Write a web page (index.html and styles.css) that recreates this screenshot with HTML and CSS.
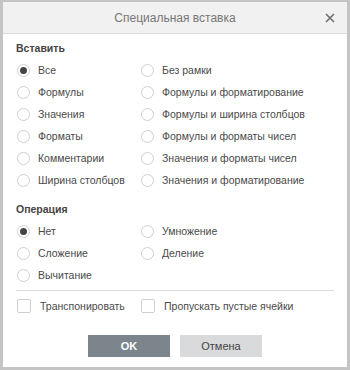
FILE: index.html
```html
<!DOCTYPE html>
<html lang="ru">

<head>
    <meta charset="UTF-8">
    <title>Специальная вставка</title>
    <link rel="stylesheet" href="styles.css">
</head>

<body>
    <div class="dialog">
        <div class="header">
            <span class="title">Специальная вставка</span>
            <span class="close">
                <svg width="10" height="10" viewBox="0 0 10 10">
                    <path d="M1 1L9 9M9 1L1 9" stroke="#6f6f6f" stroke-width="1.6" fill="none" />
                </svg>
            </span>
        </div>

        <div class="body">
            <div class="label">Вставить</div>
            <div class="grid grid-paste">
                <div class="radio checked"><i></i>Все</div>
                <div class="radio"><i></i>Без рамки</div>
                <div class="radio"><i></i>Формулы</div>
                <div class="radio"><i></i>Формулы и форматирование</div>
                <div class="radio"><i></i>Значения</div>
                <div class="radio"><i></i>Формулы и ширина столбцов</div>
                <div class="radio"><i></i>Форматы</div>
                <div class="radio"><i></i>Формулы и форматы чисел</div>
                <div class="radio"><i></i>Комментарии</div>
                <div class="radio"><i></i>Значения и форматы чисел</div>
                <div class="radio"><i></i>Ширина столбцов</div>
                <div class="radio"><i></i>Значения и форматирование</div>
            </div>

            <div class="label label-op">Операция</div>
            <div class="grid grid-op">
                <div class="radio checked"><i></i>Нет</div>
                <div class="radio"><i></i>Умножение</div>
                <div class="radio"><i></i>Сложение</div>
                <div class="radio"><i></i>Деление</div>
                <div class="radio"><i></i>Вычитание</div>
            </div>

            <div class="sep"></div>

            <div class="checks">
                <div class="check"><i></i>Транспонировать</div>
                <div class="check"><i></i>Пропускать пустые ячейки</div>
            </div>

            <div class="buttons">
                <div class="btn btn-ok">OK</div>
                <div class="btn btn-cancel">Отмена</div>
            </div>
        </div>
    </div>
</body>

</html>
```

FILE: styles.css
```css
* {
    box-sizing: border-box;
}

body {
    margin: 0;
    font-family: "Liberation Sans", Arial, sans-serif;
    font-size: 10.5px;
    color: #444;
}

.dialog {
    width: 350px;
    height: 370px;
    border: 3px solid #c4c4c4;
    border-top-width: 2px;
    background-color: #fff;
}

.header {
    height: 32px;
    background-color: #f1f1f1;
    border-bottom: 1px solid #dcdcdc;
    display: flex;
    align-items: center;
    justify-content: center;
    position: relative;
}

.title {
    font-size: 12px;
    color: #777;
}

.close {
    position: absolute;
    right: 12px;
    top: 11px;
    display: flex;
}

.body {
    padding: 7px 13px 0 13px;
}

.label {
    font-weight: bold;
    color: #444;
    height: 14px;
    line-height: 14px;
}

.label-op {
    margin-top: 11px;
}

.grid {
    display: grid;
    grid-template-columns: 124px 1fr;
    grid-auto-rows: 22px;
    margin-top: 4px;
}

.radio,
.check {
    display: flex;
    align-items: center;
    color: #4a4a4a;
}

.radio i {
    width: 13px;
    height: 13px;
    border: 1px solid #cfcfcf;
    border-radius: 50%;
    margin: 0 8px 0 1px;
    display: flex;
    align-items: center;
    justify-content: center;
}

.radio.checked i::after {
    content: "";
    width: 7px;
    height: 7px;
    border-radius: 50%;
    background-color: #444;
}

.sep {
    height: 1px;
    background-color: #dcdcdc;
    margin-top: 4px;
}

.checks {
    display: grid;
    grid-template-columns: 124px 1fr;
    height: 29px;
    margin-top: 0;
}

.check i {
    width: 14px;
    height: 14px;
    border: 1px solid #cfcfcf;
    border-radius: 2px;
    margin: 0 9px 0 1px;
}

.buttons {
    display: flex;
    justify-content: center;
    gap: 10px;
    margin-top: 15px;
}

.btn {
    width: 82px;
    height: 22px;
    line-height: 22px;
    text-align: center;
    font-size: 11px;
}

.btn-ok {
    background-color: #7d858c;
    color: #fff;
    font-weight: bold;
}

.btn-cancel {
    background-color: #d8dadc;
    color: #444;
}
```
